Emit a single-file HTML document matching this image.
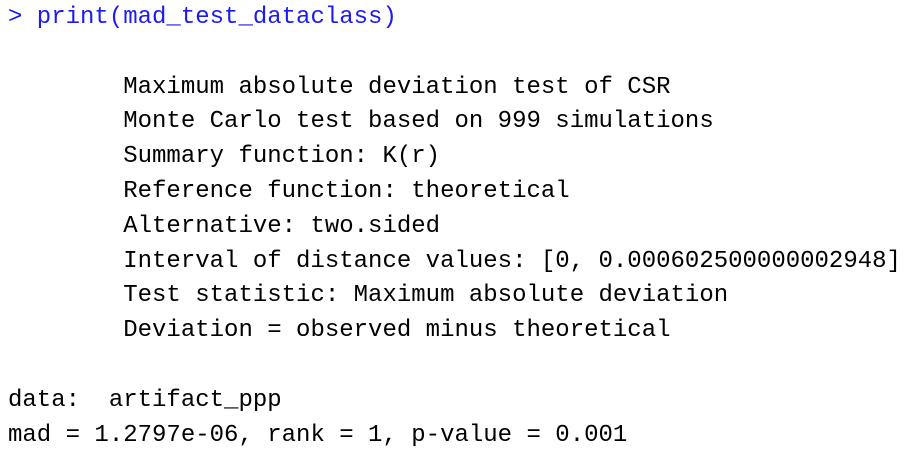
<!DOCTYPE html>
<html><head><meta charset="utf-8"><style>
html,body{margin:0;padding:0;background:#fff;width:908px;height:454px;overflow:hidden}
pre{margin:0;position:absolute;left:8px;top:1px;font-family:"Liberation Mono",monospace;font-size:24px;line-height:34.8px;color:#000}
.b{color:#1c1cf0}
</style></head><body><pre><span class="b">&gt; print(mad_test_dataclass)</span>

        Maximum absolute deviation test of CSR
        Monte Carlo test based on 999 simulations
        Summary function: K(r)
        Reference function: theoretical
        Alternative: two.sided
        Interval of distance values: [0, 0.000602500000002948]
        Test statistic: Maximum absolute deviation
        Deviation = observed minus theoretical

data:  artifact_ppp
mad = 1.2797e-06, rank = 1, p-value = 0.001</pre></body></html>
